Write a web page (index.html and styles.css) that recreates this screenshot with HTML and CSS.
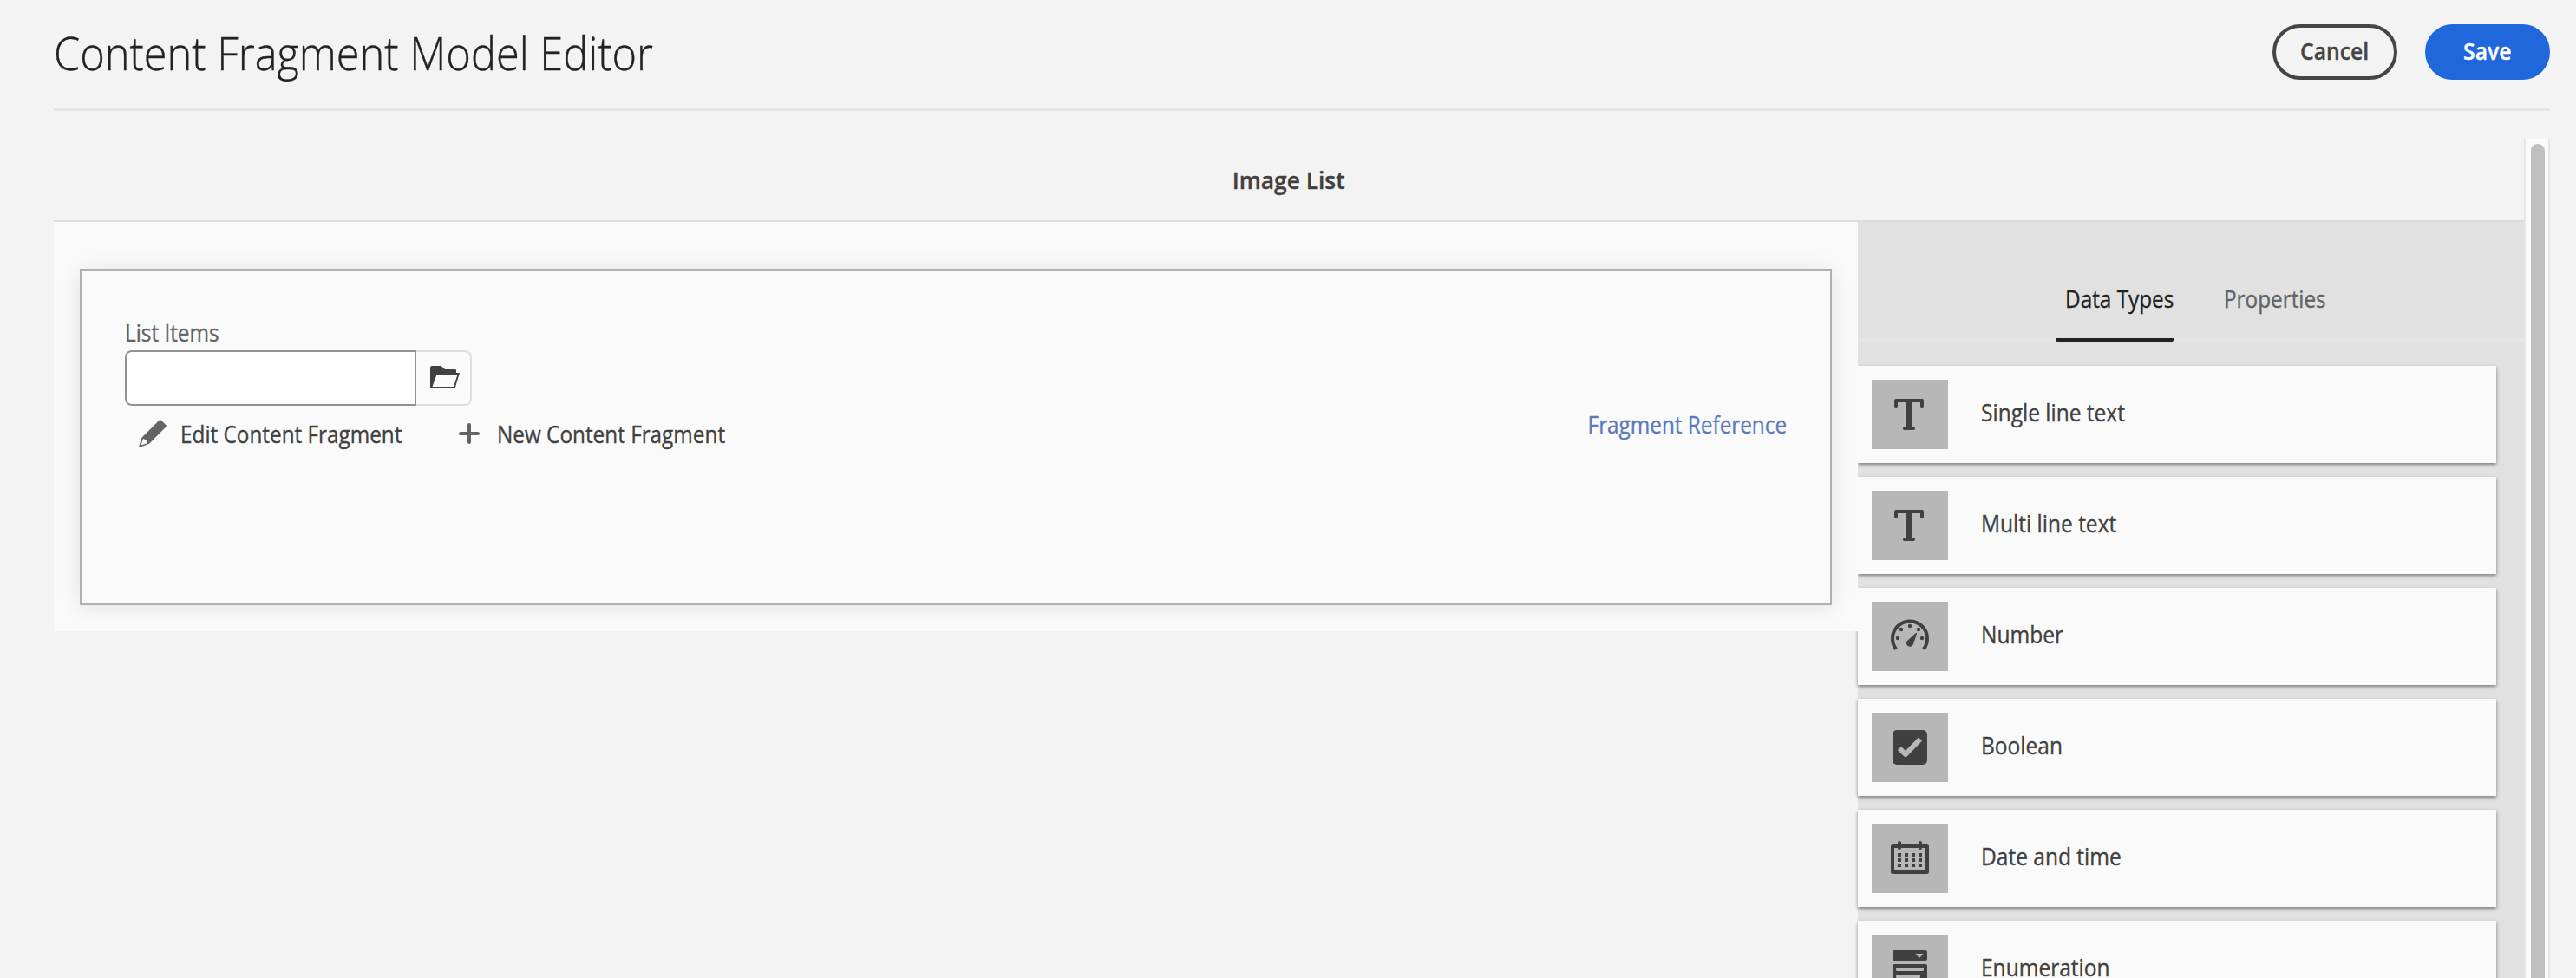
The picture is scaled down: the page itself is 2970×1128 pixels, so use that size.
FILE: index.html
```
<!DOCTYPE html>
<html lang="en">
<head>
<meta charset="utf-8">
<title>Content Fragment Model Editor</title>
<link rel="stylesheet" href="styles.css">
</head>
<body>
<div class="app">
  <header class="header">
    <h1 class="title"><span class="narrow">Content Fragment Model Editor</span></h1>
    <div class="buttons">
      <button class="button"><span class="narrow">Cancel</span></button>
      <button class="button primary"><span class="narrow">Save</span></button>
    </div>
  </header>
  <main class="main">
    <div class="content">
      <h2 class="model-name"><span class="narrow">Image List</span></h2>
      <div class="columns">
        <section class="canvas">
          <div class="field-card">
            <div class="field">
              <label class="label" for="items"><span class="narrow">List Items</span></label>
              <div class="picker">
                <input class="input" id="items" type="text">
                <button class="browse" aria-label="Browse">
                  <svg width="34" height="26" viewBox="0 0 34 26"><path fill="#404040" fill-rule="evenodd" d="M2 0H12.500L17 4H29Q30 4 30 5V8H34L28.500 26H1Q0 26 0 25V2Q0 0 2 0ZM7.500 10L2.500 24H27L31.500 10Z"/></svg>
                </button>
              </div>
              <div class="actions">
                <button class="action edit">
                  <svg width="32" height="32" viewBox="0 0 32 32"><path fill="#636363" fill-rule="evenodd" d="M23.500 .7Q24.700-.4 25.900 .7L31.400 6.200Q32.400 7.200 31.400 8.300L12 27.800L.8 31.900Q-.2 32 .1 31L3.400 20.700ZM4.900 22L2.600 29.500L10 27L8.900 23.500Z"/></svg>
                  <span class="narrow">Edit Content Fragment</span>
                </button>
                <button class="action">
                  <svg width="24" height="24" viewBox="0 0 24 24"><path stroke="#636363" stroke-width="4" stroke-linecap="round" d="M12 2V22M2 12H22"/></svg>
                  <span class="narrow">New Content Fragment</span>
                </button>
              </div>
            </div>
            <div class="type"><span class="narrow">Fragment Reference</span></div>
          </div>
        </section>
        <aside class="sidebar">
          <nav class="tabs">
            <a class="tab active"><span class="narrow">Data Types</span></a>
            <a class="tab"><span class="narrow">Properties</span></a>
          </nav>
          <ul class="types">
            <li class="item">
              <svg class="icon" viewBox="0 0 88 80"><path d="M28 22H58Q60 22 60 24V30.500Q60 32 58 32T56 30.500V26H46V54H48.500Q50 54 50 56T48.500 58H37.500Q36 58 36 56T37.500 54H40V26H30V30.500Q30 32 28 32T26 30.500V24Q26 22 28 22Z"/></svg>
              <span class="narrow">Single line text</span>
            </li>
            <li class="item">
              <svg class="icon" viewBox="0 0 88 80"><path d="M28 22H58Q60 22 60 24V30.500Q60 32 58 32T56 30.500V26H46V54H48.500Q50 54 50 56T48.500 58H37.500Q36 58 36 56T37.500 54H40V26H30V30.500Q30 32 28 32T26 30.500V24Q26 22 28 22Z"/></svg>
              <span class="narrow">Multi line text</span>
            </li>
            <li class="item">
              <svg class="icon" viewBox="0 0 88 80"><path fill="none" stroke="#404040" stroke-width="4" d="M28.200 54.800A20 20 0 1 1 59.800 54.800"/><circle cx="30" cy="42" r="2.200"/><circle cx="34" cy="32" r="2.200"/><circle cx="44" cy="28" r="2.200"/><circle cx="54" cy="32" r="2.200"/><circle cx="58" cy="42" r="2.200"/><path d="M40.300 45.800L51 36.100Q52.300 35.700 52 37L47.800 49.300A4.100 4.100 0 1 1 40.300 45.800Z"/></svg>
              <span class="narrow">Number</span>
            </li>
            <li class="item">
              <svg class="icon" viewBox="0 0 88 80"><rect x="24" y="20" width="40" height="40" rx="5"/><path fill="none" stroke="#b7b7b7" stroke-width="6" stroke-linejoin="round" d="M32 41L39 48L56 30.500"/></svg>
              <span class="narrow">Boolean</span>
            </li>
            <li class="item">
              <svg class="icon" viewBox="0 0 88 80"><rect x="24" y="26" width="40" height="30" rx=".5" fill="none" stroke="#404040" stroke-width="4"/><rect x="30" y="20" width="4" height="10" rx="2"/><rect x="54" y="20" width="4" height="10" rx="2"/><path d="M30 34h4v4h-4zM38 34h4v4h-4zM46 34h4v4h-4zM54 34h4v4h-4zM30 40h4v4h-4zM38 40h4v4h-4zM46 40h4v4h-4zM54 40h4v4h-4zM30 46h4v4h-4zM38 46h4v4h-4zM46 46h4v4h-4zM54 46h4v4h-4z"/></svg>
              <span class="narrow">Date and time</span>
            </li>
            <li class="item">
              <svg class="icon" viewBox="0 0 88 80"><path fill-rule="evenodd" d="M26 18H62Q64 18 64 20V28Q64 30 62 30H26Q24 30 24 28V20Q24 18 26 18ZM50.500 22L55 27L59.500 22Z"/><rect x="24" y="34" width="40" height="28" rx="2"/><g fill="#b7b7b7"><rect x="28" y="38" width="32" height="4" rx="1.500"/><rect x="28" y="46" width="28" height="4" rx="1.500"/><rect x="28" y="54" width="32" height="4" rx="1.500"/></g></svg>
              <span class="narrow">Enumeration</span>
            </li>
          </ul>
        </aside>
      </div>
    </div>
    <div class="scrollbar"><div class="thumb"></div></div>
  </main>
</div>
</body>
</html>
```
FILE: styles.css
```
* {
  box-sizing: border-box;
}

body {
  margin: 0;
  background: #f3f3f3;
  color: #404040;
  font: 400 26.6px/32px "Open Sans", "Noto Sans", sans-serif;
}

button {
  padding: 0;
  background: none;
  border: 0;
  color: inherit;
  font: inherit;
}

svg {
  display: block;
  flex: none;
}

.narrow {
  display: inline-block;
  white-space: nowrap;
  transform: translateY(.5px) scaleX(.914);
  transform-origin: 0 50%;
  -webkit-text-stroke: .35px currentColor;
}

.app {
  display: flex;
  flex-direction: column;
  height: 1128px;
  padding: 0 30px 0 62px;
  overflow: hidden;
}

.header {
  display: flex;
  flex: none;
  justify-content: space-between;
  height: 128px;
  padding-top: 28px;
  border-bottom: 4px solid #e6e6e6;
}

.title {
  margin: 0;
  color: #222;
  font-size: 53px;
  font-weight: 300;
  line-height: 64px;
}

.title .narrow {
  transform: translateY(1px) scaleX(.919);
}

.buttons {
  display: flex;
  gap: 32px;
}

.button {
  width: 144px;
  height: 64px;
  padding-bottom: 5px;
  border: 4px solid #454545;
  border-radius: 32px;
  color: #454545;
  font-weight: 600;
}

.button .narrow {
  transform: translateY(.5px) scaleX(.93);
  transform-origin: 50% 50%;
}

.primary {
  background: #2067dc;
  border-color: #2067dc;
  color: #fff;
}

.main {
  display: flex;
  flex: 1;
  min-height: 0;
  margin-top: 32px;
}

.content {
  flex: 1;
  overflow: hidden;
}

.model-name {
  height: 96px;
  margin: 0;
  border-bottom: 2px solid #dcdcdc;
  font-size: 27px;
  font-weight: 600;
  line-height: 94px;
  text-align: center;
}

.model-name .narrow {
  transform: translateY(1px) scaleX(.975);
  transform-origin: 50% 50%;
}

.columns {
  display: flex;
  align-items: flex-start;
}

.canvas {
  position: relative;
  z-index: 1;
  flex: 1;
  height: 472px;
  padding: 54px 30px 30px;
  background: #fafafa;
}

.field-card {
  display: flex;
  align-items: flex-start;
  justify-content: space-between;
  height: 388px;
  padding: 57px 50px 0 50px;
  background: #fafafa;
  border: 2px solid #b1b1b1;
  box-shadow: 0 2px 24px rgba(0, 0, 0, .1);
}

.label {
  display: block;
  height: 35px;
  color: #636363;
  line-height: 28px;
}

.picker {
  display: flex;
  width: 400px;
  height: 64px;
}

.input {
  width: 336px;
  border: 2px solid #929292;
  border-radius: 8px 0 0 8px;
  background: #fff;
}

.browse {
  display: flex;
  flex: 1;
  align-items: center;
  padding: 0 0 2px 16px;
  border: 2px solid #dedede;
  border-left: 0;
  border-radius: 0 8px 8px 0;
}

.actions {
  display: flex;
  padding: 16px 0 0 16px;
}

.action {
  display: flex;
  gap: 20px;
  align-items: center;
}

.edit {
  gap: 16px;
  width: 369px;
}

.type {
  margin-top: 104px;
  color: #5a7abb;
}

.type .narrow {
  transform-origin: 100% 50%;
}

.sidebar {
  width: 768px;
  background: #e1e1e1;
}

.tabs {
  display: flex;
  gap: 58px;
  justify-content: center;
  height: 138px;
  padding-top: 72px;
  border-bottom: 4px solid #e6e6e6;
}

.tab {
  width: 118px;
  height: 66px;
  color: #636363;
}

.active {
  width: 136px;
  padding-left: 11px;
  border-bottom: 4px solid #222;
  border-radius: 2px;
  color: #222;
}

.types {
  display: grid;
  gap: 16px;
  margin: 0;
  padding: 28px 32px 0 0;
  list-style: none;
}

.item {
  display: flex;
  gap: 38px;
  height: 112px;
  padding: 16px;
  background: #fafafa;
  box-shadow: 0 2px 4px rgba(0, 0, 0, .45);
  line-height: 74px;
}

.item .narrow {
  transform: translateY(.5px) scaleX(.922);
}

.icon {
  width: 88px;
  height: 80px;
  background: #b7b7b7;
  fill: #404040;
}

.scrollbar {
  width: 30px;
  padding: 6px 4px 0 6px;
  background: #fafafa;
  border: solid #e6e6e6;
  border-width: 0 2px;
}

.thumb {
  width: 16px;
  height: 1100px;
  background: #c0c0c0;
  border-radius: 8px;
}
```
